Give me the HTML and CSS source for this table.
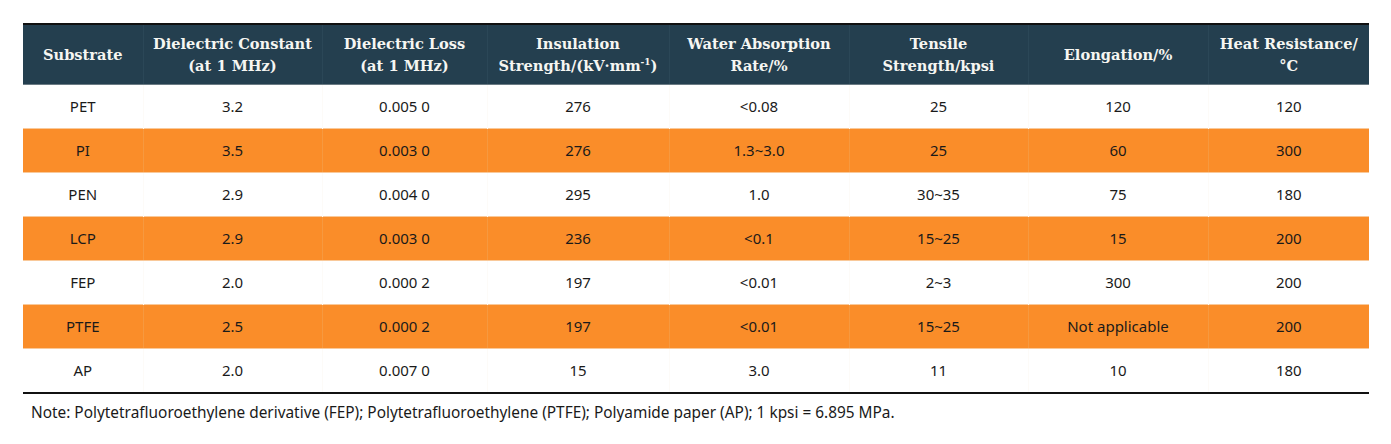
FILE: index.html
```html
<!DOCTYPE html>
<html lang="en">
<head>
<meta charset="utf-8">
<title>Substrate properties</title>
<link rel="stylesheet" href="styles.css">
</head>
<body>
<div class="wrap">
<table class="data">
<colgroup>
<col class="c1"><col class="c2"><col class="c3"><col class="c4"><col class="c5"><col class="c6"><col class="c7"><col class="c8">
</colgroup>
<thead>
<tr>
<th>Substrate</th>
<th>Dielectric Constant<br>(at 1 MHz)</th>
<th>Dielectric Loss<br>(at 1 MHz)</th>
<th>Insulation<br>Strength/(kV·mm<sup>-1</sup>)</th>
<th>Water Absorption<br>Rate/%</th>
<th>Tensile<br>Strength/kpsi</th>
<th>Elongation/%</th>
<th>Heat Resistance/<br>°C</th>
</tr>
</thead>
<tbody>
<tr><td>PET</td><td>3.2</td><td>0.005 0</td><td>276</td><td>&lt;0.08</td><td>25</td><td>120</td><td>120</td></tr>
<tr class="hl"><td>PI</td><td>3.5</td><td>0.003 0</td><td>276</td><td>1.3~3.0</td><td>25</td><td>60</td><td>300</td></tr>
<tr><td>PEN</td><td>2.9</td><td>0.004 0</td><td>295</td><td>1.0</td><td>30~35</td><td>75</td><td>180</td></tr>
<tr class="hl"><td>LCP</td><td>2.9</td><td>0.003 0</td><td>236</td><td>&lt;0.1</td><td>15~25</td><td>15</td><td>200</td></tr>
<tr><td>FEP</td><td>2.0</td><td>0.000 2</td><td>197</td><td>&lt;0.01</td><td>2~3</td><td>300</td><td>200</td></tr>
<tr class="hl"><td>PTFE</td><td>2.5</td><td>0.000 2</td><td>197</td><td>&lt;0.01</td><td>15~25</td><td>Not applicable</td><td>200</td></tr>
<tr><td>AP</td><td>2.0</td><td>0.007 0</td><td>15</td><td>3.0</td><td>11</td><td>10</td><td>180</td></tr>
</tbody>
</table>
<p class="note">Note: Polytetrafluoroethylene derivative (FEP); Polytetrafluoroethylene (PTFE); Polyamide paper (AP); 1 kpsi = 6.895 MPa.</p>
</div>
</body>
</html>
```
FILE: styles.css
```css
html, body {
  margin: 0;
  padding: 0;
  background: #ffffff;
}
.wrap {
  padding: 23px 22px 0 23px;
}
.data {
  width: 1346px;
  border-collapse: collapse;
  table-layout: fixed;
  border-top: 2px solid #111;
  border-bottom: 2px solid #111;
  font-family: "Noto Sans", "Open Sans", sans-serif;
  font-size: 15px;
  color: #1a1a1a;
}
.c1 { width: 120px; }
.c2 { width: 179px; }
.c3 { width: 165px; }
.c4 { width: 182px; }
.c5 { width: 180px; }
.c6 { width: 179px; }
.c7 { width: 180px; }
.c8 { width: 161px; }
.data th {
  background: #243f4f;
  color: #f6f6f2;
  font-family: "DejaVu Serif", serif;
  font-weight: bold;
  font-size: 14.6px;
  line-height: 22px;
  height: 59px;
  padding: 0 2px;
  text-align: center;
  vertical-align: middle;
  border-left: 1px solid #2b4757;
  border-bottom: 1px solid #6b7b84;
}
.data th:first-child { border-left: none; }
.data th sup {
  font-size: 9px;
  line-height: 0;
}
.data td {
  height: 41px;
  padding: 0 0 2px;
  text-align: center;
  vertical-align: middle;
  border-left: 1px solid #fdfbf8;
}
.data td:first-child { border-left: none; }
.data tr.hl td {
  background: #fa8d29;
  border-left-color: #f6993f;
  border-top: 1px solid #f9c99a;
  border-bottom: 1px solid #f9c99a;
}
.note {
  margin: 8px 0 0 8px;
  font-family: "Noto Sans", "Open Sans", sans-serif;
  font-size: 15.4px;
  color: #1a1a1a;
}
```
